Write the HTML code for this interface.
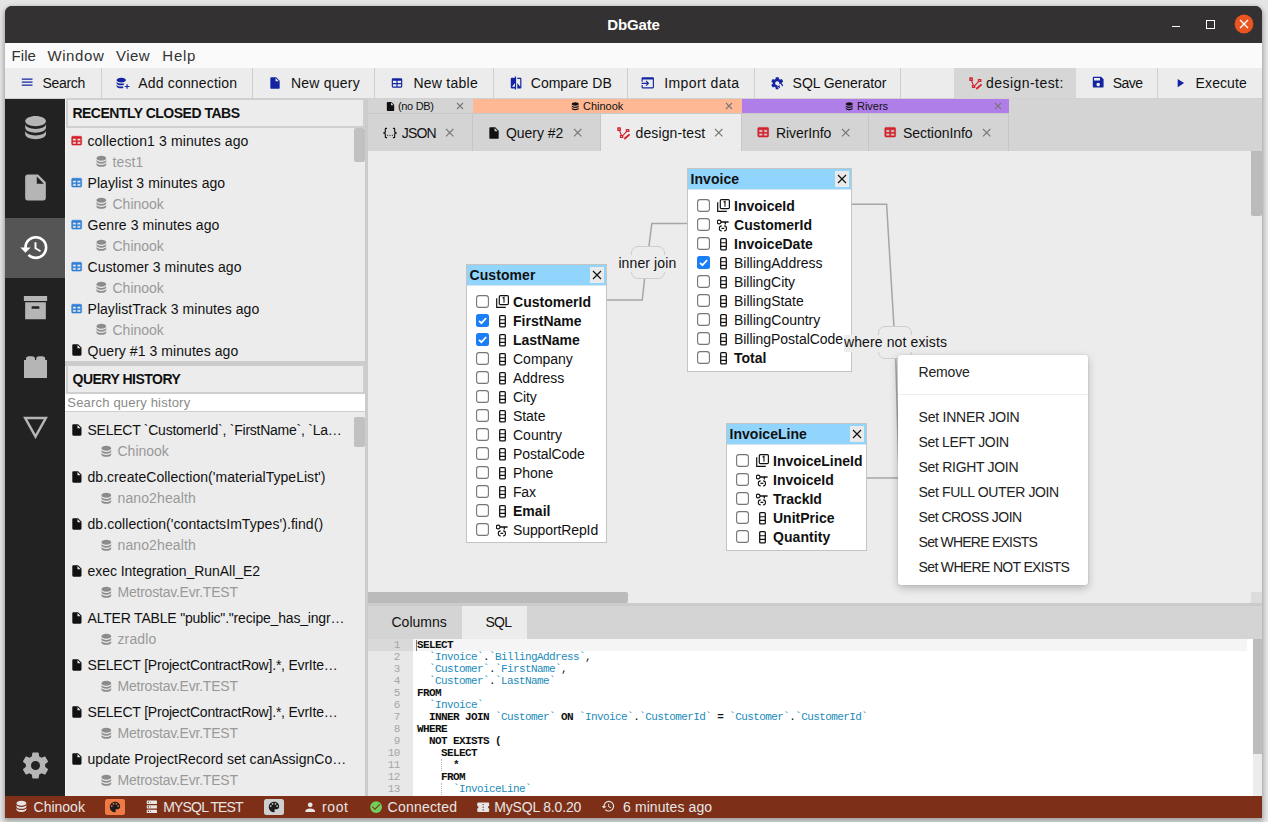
<!DOCTYPE html><html><head><meta charset="utf-8"><style>html,body{margin:0;padding:0;}body{width:1268px;height:822px;overflow:hidden;position:relative;background:#e5e5e5;font-family:"Liberation Sans",sans-serif;}</style></head><body>
<div style="position:absolute;left:5px;top:6px;width:1257px;height:812px;background:#333131;border-radius:7px 7px 0 0;box-shadow:0 2px 5px 1px rgba(0,0,0,0.32);"></div>
<div style="position:absolute;left:5px;top:6px;width:1257px;height:37px;background:#333131;border-radius:7px 7px 0 0;"></div>
<div style="position:absolute;left:333.5px;width:600px;text-align:center;top:17.00px;font:700 15px/15px 'Liberation Sans', sans-serif;color:#ffffff;white-space:pre;letter-spacing:-0.14px;">DbGate</div>
<div style="position:absolute;left:1172px;top:25.5px;width:8px;height:1.5px;background:#fff;"></div>
<div style="position:absolute;left:1206px;top:20px;width:6.5px;height:6.5px;border:1.2px solid #fff;"></div>
<svg style="position:absolute;left:1234px;top:14px;" width="20" height="20" viewBox="0 0 20 20"><circle cx="10" cy="10" r="9.4" fill="#e95420"/><path d="M6 6l8 8M14 6l-8 8" stroke="#fff" stroke-width="1.3"/></svg>
<div style="position:absolute;left:5px;top:43px;width:1257px;height:25px;background:#fafafa;"></div>
<div style="position:absolute;left:11.4px;top:48.00px;font:400 15px/15px 'Liberation Sans', sans-serif;color:#333;white-space:pre;letter-spacing:0.13px;">File</div>
<div style="position:absolute;left:47.4px;top:48.00px;font:400 15px/15px 'Liberation Sans', sans-serif;color:#333;white-space:pre;letter-spacing:0.62px;">Window</div>
<div style="position:absolute;left:116px;top:48.00px;font:400 15px/15px 'Liberation Sans', sans-serif;color:#333;white-space:pre;letter-spacing:0.47px;">View</div>
<div style="position:absolute;left:162.3px;top:48.00px;font:400 15px/15px 'Liberation Sans', sans-serif;color:#333;white-space:pre;letter-spacing:0.77px;">Help</div>
<div style="position:absolute;left:5px;top:68px;width:1257px;height:30px;background:#ececec;"></div>
<div style="position:absolute;left:5px;top:98px;width:1257px;height:1px;background:#d0d0d0;"></div>
<div style="position:absolute;left:954px;top:68px;width:122px;height:30px;background:#d6d6d6;"></div>
<div style="position:absolute;left:101px;top:68px;width:1px;height:30px;background:#cfcfcf;"></div>
<div style="position:absolute;left:252px;top:68px;width:1px;height:30px;background:#cfcfcf;"></div>
<div style="position:absolute;left:374px;top:68px;width:1px;height:30px;background:#cfcfcf;"></div>
<div style="position:absolute;left:493px;top:68px;width:1px;height:30px;background:#cfcfcf;"></div>
<div style="position:absolute;left:627px;top:68px;width:1px;height:30px;background:#cfcfcf;"></div>
<div style="position:absolute;left:754px;top:68px;width:1px;height:30px;background:#cfcfcf;"></div>
<div style="position:absolute;left:900px;top:68px;width:1px;height:30px;background:#cfcfcf;"></div>
<div style="position:absolute;left:1157px;top:68px;width:1px;height:30px;background:#cfcfcf;"></div>
<div style="position:absolute;left:42.4px;top:75.75px;font:400 14px/14px 'Liberation Sans', sans-serif;color:#111;white-space:pre;letter-spacing:-0.28px;">Search</div>
<div style="position:absolute;left:138.3px;top:75.75px;font:400 14px/14px 'Liberation Sans', sans-serif;color:#111;white-space:pre;letter-spacing:0.17px;">Add connection</div>
<div style="position:absolute;left:291px;top:75.75px;font:400 14px/14px 'Liberation Sans', sans-serif;color:#111;white-space:pre;letter-spacing:0.22px;">New query</div>
<div style="position:absolute;left:413.4px;top:75.75px;font:400 14px/14px 'Liberation Sans', sans-serif;color:#111;white-space:pre;letter-spacing:0.26px;">New table</div>
<div style="position:absolute;left:530.8px;top:75.75px;font:400 14px/14px 'Liberation Sans', sans-serif;color:#111;white-space:pre;">Compare DB</div>
<div style="position:absolute;left:664.2px;top:75.75px;font:400 14px/14px 'Liberation Sans', sans-serif;color:#111;white-space:pre;letter-spacing:0.41px;">Import data</div>
<div style="position:absolute;left:792.6px;top:75.75px;font:400 14px/14px 'Liberation Sans', sans-serif;color:#111;white-space:pre;letter-spacing:-0.05px;">SQL Generator</div>
<div style="position:absolute;left:986px;top:75.75px;font:400 14px/14px 'Liberation Sans', sans-serif;color:#111;white-space:pre;letter-spacing:0.45px;">design-test:</div>
<div style="position:absolute;left:1112.8px;top:75.75px;font:400 14px/14px 'Liberation Sans', sans-serif;color:#111;white-space:pre;letter-spacing:-0.53px;">Save</div>
<div style="position:absolute;left:1195.6px;top:75.75px;font:400 14px/14px 'Liberation Sans', sans-serif;color:#111;white-space:pre;letter-spacing:0.10px;">Execute</div>
<svg style="position:absolute;left:20.0px;top:75.35px;" width="14.3" height="14.3" viewBox="0 0 24 24"><path fill="#1424a0" fill-rule="nonzero" d="M3,6H21V8H3V6M3,11H21V13H3V11M3,16H21V18H3V16Z"/></svg>
<svg style="position:absolute;left:116.3px;top:75.7px;" width="14" height="14" viewBox="0 0 24 24"><path fill="#1424a0" fill-rule="nonzero" d="M9,3C4.58,3 1,4.79 1,7C1,9.21 4.58,11 9,11C13.42,11 17,9.21 17,7C17,4.79 13.42,3 9,3M1,9V12C1,14.21 4.58,16 9,16C10.5,16 11.9,15.8 13.1,15.4C13.4,14.6 13.9,13.9 14.5,13.3C13,12.9 11.1,13 9,13C4.58,13 1,11.21 1,9M1,14V17C1,19.21 4.58,21 9,21C10.4,21 11.7,20.8 12.8,20.5C12.4,19.7 12.2,18.9 12.1,18C11.1,18.1 10.1,18 9,18C4.58,18 1,16.21 1,14M18,14V17H15V19H18V22H20V19H23V17H20V14H18Z"/></svg>
<svg style="position:absolute;left:268.05px;top:75.85px;" width="14" height="14" viewBox="0 0 24 24"><path fill="#1424a0" fill-rule="nonzero" d="M13,9V3.5L18.5,9M6,2C4.89,2 4,2.89 4,4V20A2,2 0 0,0 6,22H18A2,2 0 0,0 20,20V8L14,2H6Z"/></svg>
<svg style="position:absolute;left:390.15px;top:75.55px;" width="14" height="14" viewBox="0 0 24 24"><path fill="#1424a0" fill-rule="nonzero" d="M5,4H19A2,2 0 0,1 21,6V18A2,2 0 0,1 19,20H5A2,2 0 0,1 3,18V6A2,2 0 0,1 5,4M5,8V12H11V8H5M13,8V12H19V8H13M5,14V18H11V14H5M13,14V18H19V14H13Z"/></svg>
<svg style="position:absolute;left:508.5px;top:75.6px;" width="14.2" height="14.2" viewBox="0 0 24 24"><path fill="#1424a0" fill-rule="nonzero" d="M19,3H14V5H19V18L14,12V21H19A2,2 0 0,0 21,19V5C21,3.89 20.1,3 19,3M10,18H5L10,12M10,3H5C3.89,3 3,3.89 3,5V19A2,2 0 0,0 5,21H10V23H12V1H10V3Z"/></svg>
<svg style="position:absolute;left:641.25px;top:76.0px;" width="13.5" height="13.5" viewBox="0 0 24 24"><path fill="#1424a0" fill-rule="nonzero" d="M1,12H10.8L8.3,9.5L9.7,8.1L14.6,13L9.7,17.9L8.3,16.5L10.8,14H1V12M21,2H3C1.9,2 1,2.9 1,4V10.1H3V6H21V20H3V16H1V20A2,2 0 0,0 3,22H21A2,2 0 0,0 23,20V4A2,2 0 0,0 21,2Z"/></svg>
<svg style="position:absolute;left:769.5px;top:75.5px;" width="14.5" height="14.5" viewBox="0 0 24 24"><path fill="#1424a0" d="M12,15.5A3.5,3.5 0 0,1 8.5,12A3.5,3.5 0 0,1 12,8.5A3.5,3.5 0 0,1 15.5,12A3.5,3.5 0 0,1 12,15.5M19.43,12.97C19.47,12.65 19.5,12.33 19.5,12C19.5,11.67 19.47,11.34 19.43,11L21.54,9.37C21.73,9.22 21.78,8.95 21.66,8.73L19.66,5.27C19.54,5.05 19.27,4.96 19.05,5.05L16.56,6.05C16.04,5.66 15.5,5.32 14.87,5.07L14.5,2.42C14.46,2.18 14.25,2 14,2H10C9.75,2 9.54,2.18 9.5,2.42L9.13,5.07C8.5,5.32 7.96,5.66 7.44,6.05L4.95,5.05C4.73,4.96 4.46,5.05 4.34,5.27L2.34,8.73C2.21,8.95 2.27,9.22 2.46,9.37L4.57,11C4.53,11.34 4.5,11.67 4.5,12C4.5,12.33 4.53,12.65 4.57,12.97L2.46,14.63C2.27,14.78 2.21,15.05 2.34,15.27L4.34,18.73C4.46,18.95 4.73,19.03 4.95,18.95L7.44,17.94C7.96,18.34 8.5,18.68 9.13,18.93L9.5,21.58C9.54,21.82 9.75,22 10,22H14C14.25,22 14.46,21.82 14.5,21.58L14.87,18.93C15.5,18.67 16.04,18.34 16.56,17.94L19.05,18.95C19.27,19.03 19.54,18.95 19.66,18.73L21.66,15.27C21.78,15.05 21.73,14.78 21.54,14.63L19.43,12.97Z"/><path d="M13 14l7 0 0 9-7 0z" fill="#ececec" transform="rotate(-35 16 18)"/><path d="M11.5 17.5l4.5-2 .5 4.8z" fill="#1424a0"/></svg>
<svg style="position:absolute;left:967px;top:75px;" width="16" height="16" viewBox="0 0 16 16"><g fill="#d3202a"><rect x="2.3" y="2.3" width="3.6" height="3.6" rx=".5"/><rect x="10.8" y="3.9" width="3.6" height="3.1" rx=".5"/><rect x="4.9" y="9.9" width="3.4" height="3.1" rx=".5"/></g><g fill="#d6d6d6"><circle cx="4.1" cy="4.1" r=".55"/><circle cx="12.6" cy="5.45" r=".55"/><circle cx="6.6" cy="11.45" r=".55"/></g><path d="M4.6 5.6L6.3 10M8 10.3L11.5 6.6" stroke="#d3202a" stroke-width="1.1" fill="none"/><path d="M9.3 14L14.6 9.4" stroke="#d3202a" stroke-width="1.9" fill="none"/></svg>
<svg style="position:absolute;left:1090.8px;top:75.3px;" width="14.4" height="14.4" viewBox="0 0 24 24"><path fill="#1424a0" fill-rule="nonzero" d="M15,9H5V5H15M12,19A3,3 0 0,1 9,16A3,3 0 0,1 12,13A3,3 0 0,1 15,16A3,3 0 0,1 12,19M17,3H5C3.89,3 3,3.9 3,5V19A2,2 0 0,0 5,21H19A2,2 0 0,0 21,19V7L17,3Z"/></svg>
<svg style="position:absolute;left:1172.8px;top:75.97px;" width="14" height="14" viewBox="0 0 24 24"><path fill="#1424a0" fill-rule="nonzero" d="M8,5.14V19.14L19,12.14L8,5.14Z"/></svg>
<div style="position:absolute;left:5px;top:99px;width:60px;height:697px;background:#222222;"></div>
<div style="position:absolute;left:5px;top:218px;width:60px;height:60px;background:#555555;"></div>
<svg style="position:absolute;left:19.55px;top:111.8px;" width="31.2" height="31.2" viewBox="0 0 24 24"><path fill="#b5b5b5" fill-rule="nonzero" d="M12,3C7.58,3 4,4.79 4,7C4,9.21 7.58,11 12,11C16.42,11 20,9.21 20,7C20,4.79 16.42,3 12,3M4,9V12C4,14.21 7.58,16 12,16C16.42,16 20,14.21 20,12V9C20,11.21 16.42,13 12,13C7.58,13 4,11.21 4,9M4,14V17C4,19.21 7.58,21 12,21C16.42,21 20,19.21 20,17V14C20,16.21 16.42,18 12,18C7.58,18 4,16.21 4,14Z"/></svg>
<svg style="position:absolute;left:19.5px;top:171.95px;" width="31" height="31" viewBox="0 0 24 24"><path fill="#b5b5b5" fill-rule="nonzero" d="M13,9V3.5L18.5,9M6,2C4.89,2 4,2.89 4,4V20A2,2 0 0,0 6,22H18A2,2 0 0,0 20,20V8L14,2H6Z"/></svg>
<svg style="position:absolute;left:19.3px;top:231.6px;" width="31" height="31" viewBox="0 0 24 24"><path fill="#ffffff" fill-rule="nonzero" d="M13.5,8H12V13L16.28,15.54L17,14.33L13.5,12.25V8M13,3A9,9 0 0,0 4,12H1L4.96,16.03L9,12H6A7,7 0 0,1 13,5A7,7 0 0,1 20,12A7,7 0 0,1 13,19C11.07,19 9.32,18.21 8.06,16.94L6.64,18.36C8.27,20 10.5,21 13,21A9,9 0 0,0 22,12A9,9 0 0,0 13,3Z"/></svg>
<svg style="position:absolute;left:19.85px;top:292.0px;" width="31" height="31" viewBox="0 0 24 24"><path fill="#b5b5b5" fill-rule="nonzero" d="M3,3H21V7H3V3M4,8H20V21H4V8M9.5,11A0.5,0.5 0 0,0 9,11.5V13H15V11.5A0.5,0.5 0 0,0 14.5,11H9.5Z"/></svg>
<svg style="position:absolute;left:23.5px;top:355px;" width="23.5" height="23.5" viewBox="0 0 23.5 23.5"><path fill="#b5b5b5" d="M0 5H2V4.5A3 3 0 0 1 5 1.2H8A3 3 0 0 1 11 4.5V5H12.2V4.5A3 3 0 0 1 15.2 1.2H18.2A3 3 0 0 1 21.2 4.5V5H23.5V23H0Z"/></svg>
<svg style="position:absolute;left:22.5px;top:416px;" width="25" height="23" viewBox="0 0 25 23"><path d="M2.2 2H22.8L12.5 20.5Z" fill="none" stroke="#b5b5b5" stroke-width="2.5"/></svg>
<svg style="position:absolute;left:19.5px;top:750.1px;" width="31" height="31" viewBox="0 0 24 24"><path fill="#b5b5b5" fill-rule="nonzero" d="M12,15.5A3.5,3.5 0 0,1 8.5,12A3.5,3.5 0 0,1 12,8.5A3.5,3.5 0 0,1 15.5,12A3.5,3.5 0 0,1 12,15.5M19.43,12.97C19.47,12.65 19.5,12.33 19.5,12C19.5,11.67 19.47,11.34 19.43,11L21.54,9.37C21.73,9.22 21.78,8.95 21.66,8.73L19.66,5.27C19.54,5.05 19.27,4.96 19.05,5.05L16.56,6.05C16.04,5.66 15.5,5.32 14.87,5.07L14.5,2.42C14.46,2.18 14.25,2 14,2H10C9.75,2 9.54,2.18 9.5,2.42L9.13,5.07C8.5,5.32 7.96,5.66 7.44,6.05L4.95,5.05C4.73,4.96 4.46,5.05 4.34,5.27L2.34,8.73C2.21,8.95 2.27,9.22 2.46,9.37L4.57,11C4.53,11.34 4.5,11.67 4.5,12C4.5,12.33 4.53,12.65 4.57,12.97L2.46,14.63C2.27,14.78 2.21,15.05 2.34,15.27L4.34,18.73C4.46,18.95 4.73,19.03 4.95,18.95L7.44,17.94C7.96,18.34 8.5,18.68 9.13,18.93L9.5,21.58C9.54,21.82 9.75,22 10,22H14C14.25,22 14.46,21.82 14.5,21.58L14.87,18.93C15.5,18.67 16.04,18.34 16.56,17.94L19.05,18.95C19.27,19.03 19.54,18.95 19.66,18.73L21.66,15.27C21.78,15.05 21.73,14.78 21.54,14.63L19.43,12.97Z"/></svg>
<div style="position:absolute;left:65px;top:99px;width:300px;height:697px;background:#ececec;"></div>
<div style="position:absolute;left:65px;top:99px;width:1px;height:697px;background:#f4f4f4;"></div>
<div style="position:absolute;left:66px;top:98px;width:295px;height:26px;border:2px solid #cfcfcf;background:#ececec;"></div>
<div style="position:absolute;left:72.4px;top:106.15px;font:700 14px/14px 'Liberation Sans', sans-serif;color:#111;white-space:pre;letter-spacing:-0.50px;">RECENTLY CLOSED TABS</div>
<svg style="position:absolute;left:70.33px;top:133.83px;" width="13.333333333333334" height="13.333333333333334" viewBox="0 0 24 24"><path fill="#d3202a" stroke="#d3202a" stroke-width="0.9" d="M5,4H19A2,2 0 0,1 21,6V18A2,2 0 0,1 19,20H5A2,2 0 0,1 3,18V6A2,2 0 0,1 5,4M5,8V12H11V8H5M13,8V12H19V8H13M5,14V18H11V14H5M13,14V18H19V14H13Z"/></svg>
<div style="position:absolute;left:87.5px;top:133.75px;font:400 14px/14px 'Liberation Sans', sans-serif;color:#111;white-space:pre;letter-spacing:0.12px;">collection1 3 minutes ago</div>
<svg style="position:absolute;left:94.42px;top:154.17px;" width="14.666666666666668" height="14.666666666666668" viewBox="0 0 24 24"><path fill="#8c8c8c" fill-rule="nonzero" d="M12,3C7.58,3 4,4.79 4,7C4,9.21 7.58,11 12,11C16.42,11 20,9.21 20,7C20,4.79 16.42,3 12,3M4,9V12C4,14.21 7.58,16 12,16C16.42,16 20,14.21 20,12V9C20,11.21 16.42,13 12,13C7.58,13 4,11.21 4,9M4,14V17C4,19.21 7.58,21 12,21C16.42,21 20,19.21 20,17V14C20,16.21 16.42,18 12,18C7.58,18 4,16.21 4,14Z"/></svg>
<div style="position:absolute;left:112.5px;top:154.95px;font:400 14px/14px 'Liberation Sans', sans-serif;color:#999999;white-space:pre;letter-spacing:0.12px;">test1</div>
<svg style="position:absolute;left:70.33px;top:175.83px;" width="13.333333333333334" height="13.333333333333334" viewBox="0 0 24 24"><path fill="#2f7fd6" stroke="#2f7fd6" stroke-width="0.9" d="M5,4H19A2,2 0 0,1 21,6V18A2,2 0 0,1 19,20H5A2,2 0 0,1 3,18V6A2,2 0 0,1 5,4M5,8V12H11V8H5M13,8V12H19V8H13M5,14V18H11V14H5M13,14V18H19V14H13Z"/></svg>
<div style="position:absolute;left:87.5px;top:175.75px;font:400 14px/14px 'Liberation Sans', sans-serif;color:#111;white-space:pre;letter-spacing:0.07px;">Playlist 3 minutes ago</div>
<svg style="position:absolute;left:94.42px;top:196.17px;" width="14.666666666666668" height="14.666666666666668" viewBox="0 0 24 24"><path fill="#8c8c8c" fill-rule="nonzero" d="M12,3C7.58,3 4,4.79 4,7C4,9.21 7.58,11 12,11C16.42,11 20,9.21 20,7C20,4.79 16.42,3 12,3M4,9V12C4,14.21 7.58,16 12,16C16.42,16 20,14.21 20,12V9C20,11.21 16.42,13 12,13C7.58,13 4,11.21 4,9M4,14V17C4,19.21 7.58,21 12,21C16.42,21 20,19.21 20,17V14C20,16.21 16.42,18 12,18C7.58,18 4,16.21 4,14Z"/></svg>
<div style="position:absolute;left:112.5px;top:196.95px;font:400 14px/14px 'Liberation Sans', sans-serif;color:#999999;white-space:pre;letter-spacing:-0.01px;">Chinook</div>
<svg style="position:absolute;left:70.33px;top:217.83px;" width="13.333333333333334" height="13.333333333333334" viewBox="0 0 24 24"><path fill="#2f7fd6" stroke="#2f7fd6" stroke-width="0.9" d="M5,4H19A2,2 0 0,1 21,6V18A2,2 0 0,1 19,20H5A2,2 0 0,1 3,18V6A2,2 0 0,1 5,4M5,8V12H11V8H5M13,8V12H19V8H13M5,14V18H11V14H5M13,14V18H19V14H13Z"/></svg>
<div style="position:absolute;left:87.5px;top:217.75px;font:400 14px/14px 'Liberation Sans', sans-serif;color:#111;white-space:pre;letter-spacing:0.06px;">Genre 3 minutes ago</div>
<svg style="position:absolute;left:94.42px;top:238.17px;" width="14.666666666666668" height="14.666666666666668" viewBox="0 0 24 24"><path fill="#8c8c8c" fill-rule="nonzero" d="M12,3C7.58,3 4,4.79 4,7C4,9.21 7.58,11 12,11C16.42,11 20,9.21 20,7C20,4.79 16.42,3 12,3M4,9V12C4,14.21 7.58,16 12,16C16.42,16 20,14.21 20,12V9C20,11.21 16.42,13 12,13C7.58,13 4,11.21 4,9M4,14V17C4,19.21 7.58,21 12,21C16.42,21 20,19.21 20,17V14C20,16.21 16.42,18 12,18C7.58,18 4,16.21 4,14Z"/></svg>
<div style="position:absolute;left:112.5px;top:238.95px;font:400 14px/14px 'Liberation Sans', sans-serif;color:#999999;white-space:pre;letter-spacing:-0.01px;">Chinook</div>
<svg style="position:absolute;left:70.33px;top:259.83px;" width="13.333333333333334" height="13.333333333333334" viewBox="0 0 24 24"><path fill="#2f7fd6" stroke="#2f7fd6" stroke-width="0.9" d="M5,4H19A2,2 0 0,1 21,6V18A2,2 0 0,1 19,20H5A2,2 0 0,1 3,18V6A2,2 0 0,1 5,4M5,8V12H11V8H5M13,8V12H19V8H13M5,14V18H11V14H5M13,14V18H19V14H13Z"/></svg>
<div style="position:absolute;left:87.5px;top:259.75px;font:400 14px/14px 'Liberation Sans', sans-serif;color:#111;white-space:pre;letter-spacing:0.07px;">Customer 3 minutes ago</div>
<svg style="position:absolute;left:94.42px;top:280.17px;" width="14.666666666666668" height="14.666666666666668" viewBox="0 0 24 24"><path fill="#8c8c8c" fill-rule="nonzero" d="M12,3C7.58,3 4,4.79 4,7C4,9.21 7.58,11 12,11C16.42,11 20,9.21 20,7C20,4.79 16.42,3 12,3M4,9V12C4,14.21 7.58,16 12,16C16.42,16 20,14.21 20,12V9C20,11.21 16.42,13 12,13C7.58,13 4,11.21 4,9M4,14V17C4,19.21 7.58,21 12,21C16.42,21 20,19.21 20,17V14C20,16.21 16.42,18 12,18C7.58,18 4,16.21 4,14Z"/></svg>
<div style="position:absolute;left:112.5px;top:280.95px;font:400 14px/14px 'Liberation Sans', sans-serif;color:#999999;white-space:pre;letter-spacing:-0.01px;">Chinook</div>
<svg style="position:absolute;left:70.33px;top:301.83px;" width="13.333333333333334" height="13.333333333333334" viewBox="0 0 24 24"><path fill="#2f7fd6" stroke="#2f7fd6" stroke-width="0.9" d="M5,4H19A2,2 0 0,1 21,6V18A2,2 0 0,1 19,20H5A2,2 0 0,1 3,18V6A2,2 0 0,1 5,4M5,8V12H11V8H5M13,8V12H19V8H13M5,14V18H11V14H5M13,14V18H19V14H13Z"/></svg>
<div style="position:absolute;left:87.5px;top:301.75px;font:400 14px/14px 'Liberation Sans', sans-serif;color:#111;white-space:pre;letter-spacing:0.04px;">PlaylistTrack 3 minutes ago</div>
<svg style="position:absolute;left:94.42px;top:322.17px;" width="14.666666666666668" height="14.666666666666668" viewBox="0 0 24 24"><path fill="#8c8c8c" fill-rule="nonzero" d="M12,3C7.58,3 4,4.79 4,7C4,9.21 7.58,11 12,11C16.42,11 20,9.21 20,7C20,4.79 16.42,3 12,3M4,9V12C4,14.21 7.58,16 12,16C16.42,16 20,14.21 20,12V9C20,11.21 16.42,13 12,13C7.58,13 4,11.21 4,9M4,14V17C4,19.21 7.58,21 12,21C16.42,21 20,19.21 20,17V14C20,16.21 16.42,18 12,18C7.58,18 4,16.21 4,14Z"/></svg>
<div style="position:absolute;left:112.5px;top:322.95px;font:400 14px/14px 'Liberation Sans', sans-serif;color:#999999;white-space:pre;letter-spacing:-0.01px;">Chinook</div>
<svg style="position:absolute;left:69.7px;top:342.85px;" width="13.799999999999999" height="13.799999999999999" viewBox="0 0 24 24"><path fill="#111" fill-rule="nonzero" d="M13,9V3.5L18.5,9M6,2C4.89,2 4,2.89 4,4V20A2,2 0 0,0 6,22H18A2,2 0 0,0 20,20V8L14,2H6Z"/></svg>
<div style="position:absolute;left:87.5px;top:343.75px;font:400 14px/14px 'Liberation Sans', sans-serif;color:#111;white-space:pre;letter-spacing:0.06px;">Query #1 3 minutes ago</div>
<div style="position:absolute;left:354px;top:128px;width:11px;height:34px;background:#c1c1c1;border-radius:2px;"></div>
<div style="position:absolute;left:65px;top:361px;width:300px;height:5px;background:#cccccc;"></div>
<div style="position:absolute;left:66px;top:366px;width:295px;height:26px;border:2px solid #cfcfcf;border-top-width:0;background:#ececec;"></div>
<div style="position:absolute;left:72.5px;top:371.85px;font:700 14px/14px 'Liberation Sans', sans-serif;color:#111;white-space:pre;letter-spacing:-0.50px;">QUERY HISTORY</div>
<div style="position:absolute;left:65px;top:394px;width:300px;height:17px;background:#ffffff;"></div>
<div style="position:absolute;left:65px;top:411px;width:300px;height:1px;background:#cfcfcf;"></div>
<div style="position:absolute;left:67.3px;top:396.00px;font:400 13px/13px 'Liberation Sans', sans-serif;color:#8a8a8a;white-space:pre;letter-spacing:0.19px;">Search query history</div>
<svg style="position:absolute;left:69.7px;top:422.85px;" width="13.799999999999999" height="13.799999999999999" viewBox="0 0 24 24"><path fill="#111" fill-rule="nonzero" d="M13,9V3.5L18.5,9M6,2C4.89,2 4,2.89 4,4V20A2,2 0 0,0 6,22H18A2,2 0 0,0 20,20V8L14,2H6Z"/></svg>
<div style="position:absolute;left:87.5px;top:422.65px;font:400 14px/14px 'Liberation Sans', sans-serif;color:#111;white-space:pre;letter-spacing:-0.25px;">SELECT `CustomerId`, `FirstName`, `La…</div>
<svg style="position:absolute;left:99.02px;top:444.17px;" width="14.666666666666668" height="14.666666666666668" viewBox="0 0 24 24"><path fill="#8c8c8c" fill-rule="nonzero" d="M12,3C7.58,3 4,4.79 4,7C4,9.21 7.58,11 12,11C16.42,11 20,9.21 20,7C20,4.79 16.42,3 12,3M4,9V12C4,14.21 7.58,16 12,16C16.42,16 20,14.21 20,12V9C20,11.21 16.42,13 12,13C7.58,13 4,11.21 4,9M4,14V17C4,19.21 7.58,21 12,21C16.42,21 20,19.21 20,17V14C20,16.21 16.42,18 12,18C7.58,18 4,16.21 4,14Z"/></svg>
<div style="position:absolute;left:117.5px;top:444.15px;font:400 14px/14px 'Liberation Sans', sans-serif;color:#999999;white-space:pre;letter-spacing:-0.01px;">Chinook</div>
<svg style="position:absolute;left:69.7px;top:469.85px;" width="13.799999999999999" height="13.799999999999999" viewBox="0 0 24 24"><path fill="#111" fill-rule="nonzero" d="M13,9V3.5L18.5,9M6,2C4.89,2 4,2.89 4,4V20A2,2 0 0,0 6,22H18A2,2 0 0,0 20,20V8L14,2H6Z"/></svg>
<div style="position:absolute;left:87.5px;top:469.65px;font:400 14px/14px 'Liberation Sans', sans-serif;color:#111;white-space:pre;letter-spacing:0.04px;">db.createCollection('materialTypeList')</div>
<svg style="position:absolute;left:99.02px;top:491.17px;" width="14.666666666666668" height="14.666666666666668" viewBox="0 0 24 24"><path fill="#8c8c8c" fill-rule="nonzero" d="M12,3C7.58,3 4,4.79 4,7C4,9.21 7.58,11 12,11C16.42,11 20,9.21 20,7C20,4.79 16.42,3 12,3M4,9V12C4,14.21 7.58,16 12,16C16.42,16 20,14.21 20,12V9C20,11.21 16.42,13 12,13C7.58,13 4,11.21 4,9M4,14V17C4,19.21 7.58,21 12,21C16.42,21 20,19.21 20,17V14C20,16.21 16.42,18 12,18C7.58,18 4,16.21 4,14Z"/></svg>
<div style="position:absolute;left:117.5px;top:491.15px;font:400 14px/14px 'Liberation Sans', sans-serif;color:#999999;white-space:pre;letter-spacing:0.12px;">nano2health</div>
<svg style="position:absolute;left:69.7px;top:516.85px;" width="13.799999999999999" height="13.799999999999999" viewBox="0 0 24 24"><path fill="#111" fill-rule="nonzero" d="M13,9V3.5L18.5,9M6,2C4.89,2 4,2.89 4,4V20A2,2 0 0,0 6,22H18A2,2 0 0,0 20,20V8L14,2H6Z"/></svg>
<div style="position:absolute;left:87.5px;top:516.65px;font:400 14px/14px 'Liberation Sans', sans-serif;color:#111;white-space:pre;letter-spacing:0.06px;">db.collection('contactsImTypes').find()</div>
<svg style="position:absolute;left:99.02px;top:538.17px;" width="14.666666666666668" height="14.666666666666668" viewBox="0 0 24 24"><path fill="#8c8c8c" fill-rule="nonzero" d="M12,3C7.58,3 4,4.79 4,7C4,9.21 7.58,11 12,11C16.42,11 20,9.21 20,7C20,4.79 16.42,3 12,3M4,9V12C4,14.21 7.58,16 12,16C16.42,16 20,14.21 20,12V9C20,11.21 16.42,13 12,13C7.58,13 4,11.21 4,9M4,14V17C4,19.21 7.58,21 12,21C16.42,21 20,19.21 20,17V14C20,16.21 16.42,18 12,18C7.58,18 4,16.21 4,14Z"/></svg>
<div style="position:absolute;left:117.5px;top:538.15px;font:400 14px/14px 'Liberation Sans', sans-serif;color:#999999;white-space:pre;letter-spacing:0.12px;">nano2health</div>
<svg style="position:absolute;left:69.7px;top:563.85px;" width="13.799999999999999" height="13.799999999999999" viewBox="0 0 24 24"><path fill="#111" fill-rule="nonzero" d="M13,9V3.5L18.5,9M6,2C4.89,2 4,2.89 4,4V20A2,2 0 0,0 6,22H18A2,2 0 0,0 20,20V8L14,2H6Z"/></svg>
<div style="position:absolute;left:87.5px;top:563.65px;font:400 14px/14px 'Liberation Sans', sans-serif;color:#111;white-space:pre;letter-spacing:-0.04px;">exec Integration_RunAll_E2</div>
<svg style="position:absolute;left:99.02px;top:585.17px;" width="14.666666666666668" height="14.666666666666668" viewBox="0 0 24 24"><path fill="#8c8c8c" fill-rule="nonzero" d="M12,3C7.58,3 4,4.79 4,7C4,9.21 7.58,11 12,11C16.42,11 20,9.21 20,7C20,4.79 16.42,3 12,3M4,9V12C4,14.21 7.58,16 12,16C16.42,16 20,14.21 20,12V9C20,11.21 16.42,13 12,13C7.58,13 4,11.21 4,9M4,14V17C4,19.21 7.58,21 12,21C16.42,21 20,19.21 20,17V14C20,16.21 16.42,18 12,18C7.58,18 4,16.21 4,14Z"/></svg>
<div style="position:absolute;left:117.5px;top:585.15px;font:400 14px/14px 'Liberation Sans', sans-serif;color:#999999;white-space:pre;letter-spacing:-0.22px;">Metrostav.Evr.TEST</div>
<svg style="position:absolute;left:69.7px;top:610.85px;" width="13.799999999999999" height="13.799999999999999" viewBox="0 0 24 24"><path fill="#111" fill-rule="nonzero" d="M13,9V3.5L18.5,9M6,2C4.89,2 4,2.89 4,4V20A2,2 0 0,0 6,22H18A2,2 0 0,0 20,20V8L14,2H6Z"/></svg>
<div style="position:absolute;left:87.5px;top:610.65px;font:400 14px/14px 'Liberation Sans', sans-serif;color:#111;white-space:pre;letter-spacing:-0.19px;">ALTER TABLE "public"."recipe_has_ingr…</div>
<svg style="position:absolute;left:99.02px;top:632.17px;" width="14.666666666666668" height="14.666666666666668" viewBox="0 0 24 24"><path fill="#8c8c8c" fill-rule="nonzero" d="M12,3C7.58,3 4,4.79 4,7C4,9.21 7.58,11 12,11C16.42,11 20,9.21 20,7C20,4.79 16.42,3 12,3M4,9V12C4,14.21 7.58,16 12,16C16.42,16 20,14.21 20,12V9C20,11.21 16.42,13 12,13C7.58,13 4,11.21 4,9M4,14V17C4,19.21 7.58,21 12,21C16.42,21 20,19.21 20,17V14C20,16.21 16.42,18 12,18C7.58,18 4,16.21 4,14Z"/></svg>
<div style="position:absolute;left:117.5px;top:632.15px;font:400 14px/14px 'Liberation Sans', sans-serif;color:#999999;white-space:pre;letter-spacing:0.12px;">zradlo</div>
<svg style="position:absolute;left:69.7px;top:657.85px;" width="13.799999999999999" height="13.799999999999999" viewBox="0 0 24 24"><path fill="#111" fill-rule="nonzero" d="M13,9V3.5L18.5,9M6,2C4.89,2 4,2.89 4,4V20A2,2 0 0,0 6,22H18A2,2 0 0,0 20,20V8L14,2H6Z"/></svg>
<div style="position:absolute;left:87.5px;top:657.65px;font:400 14px/14px 'Liberation Sans', sans-serif;color:#111;white-space:pre;letter-spacing:-0.21px;">SELECT [ProjectContractRow].*, EvrIte…</div>
<svg style="position:absolute;left:99.02px;top:679.17px;" width="14.666666666666668" height="14.666666666666668" viewBox="0 0 24 24"><path fill="#8c8c8c" fill-rule="nonzero" d="M12,3C7.58,3 4,4.79 4,7C4,9.21 7.58,11 12,11C16.42,11 20,9.21 20,7C20,4.79 16.42,3 12,3M4,9V12C4,14.21 7.58,16 12,16C16.42,16 20,14.21 20,12V9C20,11.21 16.42,13 12,13C7.58,13 4,11.21 4,9M4,14V17C4,19.21 7.58,21 12,21C16.42,21 20,19.21 20,17V14C20,16.21 16.42,18 12,18C7.58,18 4,16.21 4,14Z"/></svg>
<div style="position:absolute;left:117.5px;top:679.15px;font:400 14px/14px 'Liberation Sans', sans-serif;color:#999999;white-space:pre;letter-spacing:-0.22px;">Metrostav.Evr.TEST</div>
<svg style="position:absolute;left:69.7px;top:704.85px;" width="13.799999999999999" height="13.799999999999999" viewBox="0 0 24 24"><path fill="#111" fill-rule="nonzero" d="M13,9V3.5L18.5,9M6,2C4.89,2 4,2.89 4,4V20A2,2 0 0,0 6,22H18A2,2 0 0,0 20,20V8L14,2H6Z"/></svg>
<div style="position:absolute;left:87.5px;top:704.65px;font:400 14px/14px 'Liberation Sans', sans-serif;color:#111;white-space:pre;letter-spacing:-0.21px;">SELECT [ProjectContractRow].*, EvrIte…</div>
<svg style="position:absolute;left:99.02px;top:726.17px;" width="14.666666666666668" height="14.666666666666668" viewBox="0 0 24 24"><path fill="#8c8c8c" fill-rule="nonzero" d="M12,3C7.58,3 4,4.79 4,7C4,9.21 7.58,11 12,11C16.42,11 20,9.21 20,7C20,4.79 16.42,3 12,3M4,9V12C4,14.21 7.58,16 12,16C16.42,16 20,14.21 20,12V9C20,11.21 16.42,13 12,13C7.58,13 4,11.21 4,9M4,14V17C4,19.21 7.58,21 12,21C16.42,21 20,19.21 20,17V14C20,16.21 16.42,18 12,18C7.58,18 4,16.21 4,14Z"/></svg>
<div style="position:absolute;left:117.5px;top:726.15px;font:400 14px/14px 'Liberation Sans', sans-serif;color:#999999;white-space:pre;letter-spacing:-0.22px;">Metrostav.Evr.TEST</div>
<svg style="position:absolute;left:69.7px;top:751.85px;" width="13.799999999999999" height="13.799999999999999" viewBox="0 0 24 24"><path fill="#111" fill-rule="nonzero" d="M13,9V3.5L18.5,9M6,2C4.89,2 4,2.89 4,4V20A2,2 0 0,0 6,22H18A2,2 0 0,0 20,20V8L14,2H6Z"/></svg>
<div style="position:absolute;left:87.5px;top:751.65px;font:400 14px/14px 'Liberation Sans', sans-serif;color:#111;white-space:pre;letter-spacing:0.01px;">update ProjectRecord set canAssignCo…</div>
<svg style="position:absolute;left:99.02px;top:773.17px;" width="14.666666666666668" height="14.666666666666668" viewBox="0 0 24 24"><path fill="#8c8c8c" fill-rule="nonzero" d="M12,3C7.58,3 4,4.79 4,7C4,9.21 7.58,11 12,11C16.42,11 20,9.21 20,7C20,4.79 16.42,3 12,3M4,9V12C4,14.21 7.58,16 12,16C16.42,16 20,14.21 20,12V9C20,11.21 16.42,13 12,13C7.58,13 4,11.21 4,9M4,14V17C4,19.21 7.58,21 12,21C16.42,21 20,19.21 20,17V14C20,16.21 16.42,18 12,18C7.58,18 4,16.21 4,14Z"/></svg>
<div style="position:absolute;left:117.5px;top:773.15px;font:400 14px/14px 'Liberation Sans', sans-serif;color:#999999;white-space:pre;letter-spacing:-0.22px;">Metrostav.Evr.TEST</div>
<div style="position:absolute;left:354px;top:417px;width:11px;height:30px;background:#c1c1c1;border-radius:2px;"></div>
<div style="position:absolute;left:365px;top:99px;width:3px;height:697px;background:#cccccc;"></div>
<div style="position:absolute;left:368px;top:99px;width:894px;height:52px;background:#d4d4d4;"></div>
<div style="position:absolute;left:368px;top:151px;width:894px;height:452px;background:#ececec;"></div>
<div style="position:absolute;left:473px;top:99px;width:269px;height:14px;background:#ffb894;"></div>
<div style="position:absolute;left:742px;top:99px;width:267px;height:14px;background:#b07ee8;"></div>
<div style="position:absolute;left:368px;top:113px;width:641px;height:1px;background:#c8c8c8;"></div>
<div style="position:absolute;left:601px;top:114px;width:141px;height:37px;background:#ececec;"></div>
<div style="position:absolute;left:472px;top:114px;width:1px;height:37px;background:#c6c6c6;"></div>
<div style="position:absolute;left:600px;top:114px;width:1px;height:37px;background:#c6c6c6;"></div>
<div style="position:absolute;left:741px;top:114px;width:1px;height:37px;background:#c6c6c6;"></div>
<div style="position:absolute;left:868px;top:114px;width:1px;height:37px;background:#c6c6c6;"></div>
<div style="position:absolute;left:1008px;top:114px;width:1px;height:37px;background:#c6c6c6;"></div>
<svg style="position:absolute;left:385.03px;top:100.78px;" width="11.04" height="11.04" viewBox="0 0 24 24"><path fill="#111" fill-rule="nonzero" d="M13,9V3.5L18.5,9M6,2C4.89,2 4,2.89 4,4V20A2,2 0 0,0 6,22H18A2,2 0 0,0 20,20V8L14,2H6Z"/></svg>
<div style="position:absolute;left:398px;top:100.69px;font:400 11px/11px 'Liberation Sans', sans-serif;color:#111;white-space:pre;letter-spacing:-0.33px;">(no DB)</div>
<svg style="position:absolute;left:456.25px;top:101.9px;" width="8" height="8" viewBox="0 0 8 8"><path d="M1 1L7 7M7 1L1 7" stroke="#777" stroke-width="1.1"/></svg>
<svg style="position:absolute;left:570.08px;top:100.78px;" width="10.533333333333333" height="10.533333333333333" viewBox="0 0 24 24"><path fill="#111" fill-rule="nonzero" d="M12,3C7.58,3 4,4.79 4,7C4,9.21 7.58,11 12,11C16.42,11 20,9.21 20,7C20,4.79 16.42,3 12,3M4,9V12C4,14.21 7.58,16 12,16C16.42,16 20,14.21 20,12V9C20,11.21 16.42,13 12,13C7.58,13 4,11.21 4,9M4,14V17C4,19.21 7.58,21 12,21C16.42,21 20,19.21 20,17V14C20,16.21 16.42,18 12,18C7.58,18 4,16.21 4,14Z"/></svg>
<div style="position:absolute;left:583px;top:100.69px;font:400 11px/11px 'Liberation Sans', sans-serif;color:#111;white-space:pre;letter-spacing:-0.01px;">Chinook</div>
<svg style="position:absolute;left:725.25px;top:101.9px;" width="8" height="8" viewBox="0 0 8 8"><path d="M1 1L7 7M7 1L1 7" stroke="#777" stroke-width="1.1"/></svg>
<svg style="position:absolute;left:844.08px;top:100.78px;" width="10.533333333333333" height="10.533333333333333" viewBox="0 0 24 24"><path fill="#111" fill-rule="nonzero" d="M12,3C7.58,3 4,4.79 4,7C4,9.21 7.58,11 12,11C16.42,11 20,9.21 20,7C20,4.79 16.42,3 12,3M4,9V12C4,14.21 7.58,16 12,16C16.42,16 20,14.21 20,12V9C20,11.21 16.42,13 12,13C7.58,13 4,11.21 4,9M4,14V17C4,19.21 7.58,21 12,21C16.42,21 20,19.21 20,17V14C20,16.21 16.42,18 12,18C7.58,18 4,16.21 4,14Z"/></svg>
<div style="position:absolute;left:857px;top:100.69px;font:400 11px/11px 'Liberation Sans', sans-serif;color:#111;white-space:pre;letter-spacing:-0.03px;">Rivers</div>
<svg style="position:absolute;left:994.25px;top:101.9px;" width="8" height="8" viewBox="0 0 8 8"><path d="M1 1L7 7M7 1L1 7" stroke="#777" stroke-width="1.1"/></svg>
<svg style="position:absolute;left:383px;top:125.85px;" width="14" height="14" viewBox="0 0 24 24"><path fill="#111" d="M5,3H7V5H5V10A2,2 0 0,1 3,12A2,2 0 0,1 5,14V19H7V21H5C3.93,20.73 3,20.1 3,19V15A2,2 0 0,0 1,13H0V11H1A2,2 0 0,0 3,9V5A2,2 0 0,1 5,3M19,3A2,2 0 0,1 21,5V9A2,2 0 0,0 23,11H24V13H23A2,2 0 0,0 21,15V19A2,2 0 0,1 19,21H17V19H19V14A2,2 0 0,1 21,12A2,2 0 0,1 19,10V5H17V3H19M12,15A1,1 0 0,1 13,16A1,1 0 0,1 12,17A1,1 0 0,1 11,16A1,1 0 0,1 12,15M8,15A1,1 0 0,1 9,16A1,1 0 0,1 8,17A1,1 0 0,1 7,16A1,1 0 0,1 8,15M16,15A1,1 0 0,1 17,16A1,1 0 0,1 16,17A1,1 0 0,1 15,16A1,1 0 0,1 16,15Z"/></svg>
<div style="position:absolute;left:401.7px;top:126.15px;font:400 14px/14px 'Liberation Sans', sans-serif;color:#111;white-space:pre;letter-spacing:-0.78px;">JSON</div>
<svg style="position:absolute;left:444.8px;top:128.0px;" width="9.4" height="9.4" viewBox="0 0 9.4 9.4"><path d="M1 1L8.4 8.4M8.4 1L1 8.4" stroke="#777" stroke-width="1.1"/></svg>
<svg style="position:absolute;left:487.33px;top:125.73px;" width="14.04" height="14.04" viewBox="0 0 24 24"><path fill="#111" fill-rule="nonzero" d="M13,9V3.5L18.5,9M6,2C4.89,2 4,2.89 4,4V20A2,2 0 0,0 6,22H18A2,2 0 0,0 20,20V8L14,2H6Z"/></svg>
<div style="position:absolute;left:506px;top:126.15px;font:400 14px/14px 'Liberation Sans', sans-serif;color:#111;white-space:pre;letter-spacing:-0.06px;">Query #2</div>
<svg style="position:absolute;left:573.3px;top:128.0px;" width="9.4" height="9.4" viewBox="0 0 9.4 9.4"><path d="M1 1L8.4 8.4M8.4 1L1 8.4" stroke="#777" stroke-width="1.1"/></svg>
<svg style="position:absolute;left:615px;top:125px;" width="16" height="16" viewBox="0 0 16 16"><g fill="#d3202a"><rect x="2.3" y="2.3" width="3.6" height="3.6" rx=".5"/><rect x="10.8" y="3.9" width="3.6" height="3.1" rx=".5"/><rect x="4.9" y="9.9" width="3.4" height="3.1" rx=".5"/></g><g fill="#ececec"><circle cx="4.1" cy="4.1" r=".55"/><circle cx="12.6" cy="5.45" r=".55"/><circle cx="6.6" cy="11.45" r=".55"/></g><path d="M4.6 5.6L6.3 10M8 10.3L11.5 6.6" stroke="#d3202a" stroke-width="1.1" fill="none"/><path d="M9.3 14L14.6 9.4" stroke="#d3202a" stroke-width="1.9" fill="none"/></svg>
<div style="position:absolute;left:635.5px;top:126.15px;font:400 14px/14px 'Liberation Sans', sans-serif;color:#111;white-space:pre;letter-spacing:0.12px;">design-test</div>
<svg style="position:absolute;left:714.3px;top:128.0px;" width="9.4" height="9.4" viewBox="0 0 9.4 9.4"><path d="M1 1L8.4 8.4M8.4 1L1 8.4" stroke="#777" stroke-width="1.1"/></svg>
<svg style="position:absolute;left:756.4px;top:125.35px;" width="14.400000000000002" height="14.400000000000002" viewBox="0 0 24 24"><path fill="#d3202a" stroke="#d3202a" stroke-width="0.9" d="M5,4H19A2,2 0 0,1 21,6V18A2,2 0 0,1 19,20H5A2,2 0 0,1 3,18V6A2,2 0 0,1 5,4M5,8V12H11V8H5M13,8V12H19V8H13M5,14V18H11V14H5M13,14V18H19V14H13Z"/></svg>
<div style="position:absolute;left:776px;top:126.15px;font:400 14px/14px 'Liberation Sans', sans-serif;color:#111;white-space:pre;letter-spacing:-0.08px;">RiverInfo</div>
<svg style="position:absolute;left:841.3px;top:128.0px;" width="9.4" height="9.4" viewBox="0 0 9.4 9.4"><path d="M1 1L8.4 8.4M8.4 1L1 8.4" stroke="#777" stroke-width="1.1"/></svg>
<svg style="position:absolute;left:883.4px;top:125.35px;" width="14.400000000000002" height="14.400000000000002" viewBox="0 0 24 24"><path fill="#d3202a" stroke="#d3202a" stroke-width="0.9" d="M5,4H19A2,2 0 0,1 21,6V18A2,2 0 0,1 19,20H5A2,2 0 0,1 3,18V6A2,2 0 0,1 5,4M5,8V12H11V8H5M13,8V12H19V8H13M5,14V18H11V14H5M13,14V18H19V14H13Z"/></svg>
<div style="position:absolute;left:903px;top:126.15px;font:400 14px/14px 'Liberation Sans', sans-serif;color:#111;white-space:pre;letter-spacing:-0.04px;">SectionInfo</div>
<svg style="position:absolute;left:982.3px;top:128.0px;" width="9.4" height="9.4" viewBox="0 0 9.4 9.4"><path d="M1 1L8.4 8.4M8.4 1L1 8.4" stroke="#777" stroke-width="1.1"/></svg>
<div style="position:absolute;left:1251px;top:151px;width:11px;height:65px;background:#bbbbbb;border-radius:0 0 2px 2px;"></div>
<div style="position:absolute;left:368px;top:592px;width:260px;height:11px;background:#bbbbbb;border-radius:0 2px 2px 0;"></div>
<div style="position:absolute;left:1251px;top:592px;width:11px;height:11px;background:#dcdcdc;"></div>
<svg style="position:absolute;left:368px;top:151px;" width="894" height="452" viewBox="0 0 894 452"><g fill="none" stroke="#a6a6a6" stroke-width="1.5"><path d="M239 149H274.29999999999995L276.5 128"/><path d="M281 95L283.79999999999995 72.6H319.5"/><path d="M484 53.19999999999999H518.6L525.9 175"/><path d="M527.8 208L531 327H498"/></g></svg>
<div style="position:absolute;left:631px;top:246px;width:32px;height:31px;border:1px solid #cdcdcd;border-radius:7px;background:#ececec;"></div>
<div style="position:absolute;left:618px;top:255.2px;width:59px;height:17px;background:#ececec;"></div>
<div style="position:absolute;left:347.4px;width:600px;text-align:center;top:255.55px;font:400 14px/14px 'Liberation Sans', sans-serif;color:#111;white-space:pre;letter-spacing:0.12px;">inner join</div>
<div style="position:absolute;left:466px;top:264px;width:139px;height:277px;border:1px solid #c4c4c4;background:#fff;"></div>
<div style="position:absolute;left:467px;top:265px;width:139px;height:20px;background:#91d5fd;"></div>
<div style="position:absolute;left:467px;top:285px;width:139px;height:1px;background:#d6e6ef;"></div>
<div style="position:absolute;left:469.5px;top:267.75px;font:700 14px/14px 'Liberation Sans', sans-serif;color:#111;white-space:pre;letter-spacing:0.07px;">Customer</div>
<div style="position:absolute;left:590px;top:267px;width:14px;height:16px;background:#eaeaea;"></div>
<svg style="position:absolute;left:591.6px;top:269.9px;" width="10" height="10" viewBox="0 0 10 10"><path d="M1 1L9 9M9 1L1 9" stroke="#111" stroke-width="1.15"/></svg>
<svg style="position:absolute;left:476px;top:294.8px;" width="13" height="13" viewBox="0 0 13 13"><rect x="0.6" y="0.6" width="11.8" height="11.8" rx="2.5" fill="#fff" stroke="#767676" stroke-width="1.1"/></svg>
<svg style="position:absolute;left:496px;top:294.8px;" width="13" height="13" viewBox="0 0 13 13"><path d="M0.7 3.2v9.1h9.1" fill="none" stroke="#111" stroke-width="1.2"/><rect x="3.3" y="0.6" width="9.1" height="9.1" rx="1.2" fill="none" stroke="#111" stroke-width="1.2"/><path d="M6.6 3.3l1.4-1v5.4" fill="none" stroke="#111" stroke-width="1.1"/></svg>
<div style="position:absolute;left:513px;top:295.05px;font:700 14px/14px 'Liberation Sans', sans-serif;color:#111;white-space:pre;letter-spacing:0.02px;">CustomerId</div>
<svg style="position:absolute;left:476px;top:313.8px;" width="13" height="13" viewBox="0 0 13 13"><rect x="0" y="0" width="13" height="13" rx="2.5" fill="#1a7ef7"/><path d="M3 6.8l2.4 2.4 4.8-5.2" fill="none" stroke="#fff" stroke-width="1.8"/></svg>
<svg style="position:absolute;left:498.5px;top:314.8px;" width="7" height="13" viewBox="0 0 7 13"><rect x="0.7" y="0.7" width="5.6" height="11.2" rx="0.9" fill="none" stroke="#111" stroke-width="1.3"/><path d="M1 4.8h5M1 8.4h5" stroke="#111" stroke-width="1.1"/></svg>
<div style="position:absolute;left:513px;top:314.05px;font:700 14px/14px 'Liberation Sans', sans-serif;color:#111;white-space:pre;letter-spacing:0.01px;">FirstName</div>
<svg style="position:absolute;left:476px;top:332.8px;" width="13" height="13" viewBox="0 0 13 13"><rect x="0" y="0" width="13" height="13" rx="2.5" fill="#1a7ef7"/><path d="M3 6.8l2.4 2.4 4.8-5.2" fill="none" stroke="#fff" stroke-width="1.8"/></svg>
<svg style="position:absolute;left:498.5px;top:333.8px;" width="7" height="13" viewBox="0 0 7 13"><rect x="0.7" y="0.7" width="5.6" height="11.2" rx="0.9" fill="none" stroke="#111" stroke-width="1.3"/><path d="M1 4.8h5M1 8.4h5" stroke="#111" stroke-width="1.1"/></svg>
<div style="position:absolute;left:513px;top:333.05px;font:700 14px/14px 'Liberation Sans', sans-serif;color:#111;white-space:pre;letter-spacing:-0.01px;">LastName</div>
<svg style="position:absolute;left:476px;top:351.8px;" width="13" height="13" viewBox="0 0 13 13"><rect x="0.6" y="0.6" width="11.8" height="11.8" rx="2.5" fill="#fff" stroke="#767676" stroke-width="1.1"/></svg>
<svg style="position:absolute;left:498.5px;top:352.8px;" width="7" height="13" viewBox="0 0 7 13"><rect x="0.7" y="0.7" width="5.6" height="11.2" rx="0.9" fill="none" stroke="#111" stroke-width="1.3"/><path d="M1 4.8h5M1 8.4h5" stroke="#111" stroke-width="1.1"/></svg>
<div style="position:absolute;left:513px;top:352.05px;font:400 14px/14px 'Liberation Sans', sans-serif;color:#111;white-space:pre;letter-spacing:-0.01px;">Company</div>
<svg style="position:absolute;left:476px;top:370.8px;" width="13" height="13" viewBox="0 0 13 13"><rect x="0.6" y="0.6" width="11.8" height="11.8" rx="2.5" fill="#fff" stroke="#767676" stroke-width="1.1"/></svg>
<svg style="position:absolute;left:498.5px;top:371.8px;" width="7" height="13" viewBox="0 0 7 13"><rect x="0.7" y="0.7" width="5.6" height="11.2" rx="0.9" fill="none" stroke="#111" stroke-width="1.3"/><path d="M1 4.8h5M1 8.4h5" stroke="#111" stroke-width="1.1"/></svg>
<div style="position:absolute;left:513px;top:371.05px;font:400 14px/14px 'Liberation Sans', sans-serif;color:#111;white-space:pre;letter-spacing:-0.01px;">Address</div>
<svg style="position:absolute;left:476px;top:389.8px;" width="13" height="13" viewBox="0 0 13 13"><rect x="0.6" y="0.6" width="11.8" height="11.8" rx="2.5" fill="#fff" stroke="#767676" stroke-width="1.1"/></svg>
<svg style="position:absolute;left:498.5px;top:390.8px;" width="7" height="13" viewBox="0 0 7 13"><rect x="0.7" y="0.7" width="5.6" height="11.2" rx="0.9" fill="none" stroke="#111" stroke-width="1.3"/><path d="M1 4.8h5M1 8.4h5" stroke="#111" stroke-width="1.1"/></svg>
<div style="position:absolute;left:513px;top:390.05px;font:400 14px/14px 'Liberation Sans', sans-serif;color:#111;white-space:pre;letter-spacing:-0.11px;">City</div>
<svg style="position:absolute;left:476px;top:408.8px;" width="13" height="13" viewBox="0 0 13 13"><rect x="0.6" y="0.6" width="11.8" height="11.8" rx="2.5" fill="#fff" stroke="#767676" stroke-width="1.1"/></svg>
<svg style="position:absolute;left:498.5px;top:409.8px;" width="7" height="13" viewBox="0 0 7 13"><rect x="0.7" y="0.7" width="5.6" height="11.2" rx="0.9" fill="none" stroke="#111" stroke-width="1.3"/><path d="M1 4.8h5M1 8.4h5" stroke="#111" stroke-width="1.1"/></svg>
<div style="position:absolute;left:513px;top:409.05px;font:400 14px/14px 'Liberation Sans', sans-serif;color:#111;white-space:pre;letter-spacing:-0.06px;">State</div>
<svg style="position:absolute;left:476px;top:427.8px;" width="13" height="13" viewBox="0 0 13 13"><rect x="0.6" y="0.6" width="11.8" height="11.8" rx="2.5" fill="#fff" stroke="#767676" stroke-width="1.1"/></svg>
<svg style="position:absolute;left:498.5px;top:428.8px;" width="7" height="13" viewBox="0 0 7 13"><rect x="0.7" y="0.7" width="5.6" height="11.2" rx="0.9" fill="none" stroke="#111" stroke-width="1.3"/><path d="M1 4.8h5M1 8.4h5" stroke="#111" stroke-width="1.1"/></svg>
<div style="position:absolute;left:513px;top:428.05px;font:400 14px/14px 'Liberation Sans', sans-serif;color:#111;white-space:pre;letter-spacing:-0.01px;">Country</div>
<svg style="position:absolute;left:476px;top:446.8px;" width="13" height="13" viewBox="0 0 13 13"><rect x="0.6" y="0.6" width="11.8" height="11.8" rx="2.5" fill="#fff" stroke="#767676" stroke-width="1.1"/></svg>
<svg style="position:absolute;left:498.5px;top:447.8px;" width="7" height="13" viewBox="0 0 7 13"><rect x="0.7" y="0.7" width="5.6" height="11.2" rx="0.9" fill="none" stroke="#111" stroke-width="1.3"/><path d="M1 4.8h5M1 8.4h5" stroke="#111" stroke-width="1.1"/></svg>
<div style="position:absolute;left:513px;top:447.05px;font:400 14px/14px 'Liberation Sans', sans-serif;color:#111;white-space:pre;letter-spacing:-0.06px;">PostalCode</div>
<svg style="position:absolute;left:476px;top:465.8px;" width="13" height="13" viewBox="0 0 13 13"><rect x="0.6" y="0.6" width="11.8" height="11.8" rx="2.5" fill="#fff" stroke="#767676" stroke-width="1.1"/></svg>
<svg style="position:absolute;left:498.5px;top:466.8px;" width="7" height="13" viewBox="0 0 7 13"><rect x="0.7" y="0.7" width="5.6" height="11.2" rx="0.9" fill="none" stroke="#111" stroke-width="1.3"/><path d="M1 4.8h5M1 8.4h5" stroke="#111" stroke-width="1.1"/></svg>
<div style="position:absolute;left:513px;top:466.05px;font:400 14px/14px 'Liberation Sans', sans-serif;color:#111;white-space:pre;letter-spacing:-0.06px;">Phone</div>
<svg style="position:absolute;left:476px;top:484.8px;" width="13" height="13" viewBox="0 0 13 13"><rect x="0.6" y="0.6" width="11.8" height="11.8" rx="2.5" fill="#fff" stroke="#767676" stroke-width="1.1"/></svg>
<svg style="position:absolute;left:498.5px;top:485.8px;" width="7" height="13" viewBox="0 0 7 13"><rect x="0.7" y="0.7" width="5.6" height="11.2" rx="0.9" fill="none" stroke="#111" stroke-width="1.3"/><path d="M1 4.8h5M1 8.4h5" stroke="#111" stroke-width="1.1"/></svg>
<div style="position:absolute;left:513px;top:485.05px;font:400 14px/14px 'Liberation Sans', sans-serif;color:#111;white-space:pre;letter-spacing:-0.18px;">Fax</div>
<svg style="position:absolute;left:476px;top:503.8px;" width="13" height="13" viewBox="0 0 13 13"><rect x="0.6" y="0.6" width="11.8" height="11.8" rx="2.5" fill="#fff" stroke="#767676" stroke-width="1.1"/></svg>
<svg style="position:absolute;left:498.5px;top:504.8px;" width="7" height="13" viewBox="0 0 7 13"><rect x="0.7" y="0.7" width="5.6" height="11.2" rx="0.9" fill="none" stroke="#111" stroke-width="1.3"/><path d="M1 4.8h5M1 8.4h5" stroke="#111" stroke-width="1.1"/></svg>
<div style="position:absolute;left:513px;top:504.05px;font:700 14px/14px 'Liberation Sans', sans-serif;color:#111;white-space:pre;letter-spacing:0.02px;">Email</div>
<svg style="position:absolute;left:476px;top:522.8px;" width="13" height="13" viewBox="0 0 13 13"><rect x="0.6" y="0.6" width="11.8" height="11.8" rx="2.5" fill="#fff" stroke="#767676" stroke-width="1.1"/></svg>
<svg style="position:absolute;left:496px;top:522.8px;" width="13" height="14" viewBox="0 0 13 14"><circle cx="2.15" cy="4" r="1.85" fill="none" stroke="#111" stroke-width="1.2"/><path d="M4 4H11.6M8.3 4V6.4" stroke="#111" stroke-width="1.3" fill="none"/><path d="M4.7 7.9A2.4 2.5 0 0 0 4.7 12.9M7.1 7.9A2.4 2.5 0 0 1 7.1 12.9M4.5 10.4H7.3" stroke="#111" stroke-width="1.1" fill="none"/></svg>
<div style="position:absolute;left:513px;top:523.05px;font:400 14px/14px 'Liberation Sans', sans-serif;color:#111;white-space:pre;letter-spacing:-0.11px;">SupportRepId</div>
<div style="position:absolute;left:687px;top:168px;width:163px;height:202px;border:1px solid #c4c4c4;background:#fff;"></div>
<div style="position:absolute;left:688px;top:169px;width:163px;height:20px;background:#91d5fd;"></div>
<div style="position:absolute;left:688px;top:189px;width:163px;height:1px;background:#d6e6ef;"></div>
<div style="position:absolute;left:690.5px;top:171.75px;font:700 14px/14px 'Liberation Sans', sans-serif;color:#111;white-space:pre;letter-spacing:0.06px;">Invoice</div>
<div style="position:absolute;left:835px;top:171px;width:14px;height:16px;background:#eaeaea;"></div>
<svg style="position:absolute;left:836.6px;top:173.9px;" width="10" height="10" viewBox="0 0 10 10"><path d="M1 1L9 9M9 1L1 9" stroke="#111" stroke-width="1.15"/></svg>
<svg style="position:absolute;left:697px;top:198.8px;" width="13" height="13" viewBox="0 0 13 13"><rect x="0.6" y="0.6" width="11.8" height="11.8" rx="2.5" fill="#fff" stroke="#767676" stroke-width="1.1"/></svg>
<svg style="position:absolute;left:717px;top:198.8px;" width="13" height="13" viewBox="0 0 13 13"><path d="M0.7 3.2v9.1h9.1" fill="none" stroke="#111" stroke-width="1.2"/><rect x="3.3" y="0.6" width="9.1" height="9.1" rx="1.2" fill="none" stroke="#111" stroke-width="1.2"/><path d="M6.6 3.3l1.4-1v5.4" fill="none" stroke="#111" stroke-width="1.1"/></svg>
<div style="position:absolute;left:734px;top:199.05px;font:700 14px/14px 'Liberation Sans', sans-serif;color:#111;white-space:pre;letter-spacing:0.01px;">InvoiceId</div>
<svg style="position:absolute;left:697px;top:217.8px;" width="13" height="13" viewBox="0 0 13 13"><rect x="0.6" y="0.6" width="11.8" height="11.8" rx="2.5" fill="#fff" stroke="#767676" stroke-width="1.1"/></svg>
<svg style="position:absolute;left:717px;top:217.8px;" width="13" height="14" viewBox="0 0 13 14"><circle cx="2.15" cy="4" r="1.85" fill="none" stroke="#111" stroke-width="1.2"/><path d="M4 4H11.6M8.3 4V6.4" stroke="#111" stroke-width="1.3" fill="none"/><path d="M4.7 7.9A2.4 2.5 0 0 0 4.7 12.9M7.1 7.9A2.4 2.5 0 0 1 7.1 12.9M4.5 10.4H7.3" stroke="#111" stroke-width="1.1" fill="none"/></svg>
<div style="position:absolute;left:734px;top:218.05px;font:700 14px/14px 'Liberation Sans', sans-serif;color:#111;white-space:pre;letter-spacing:0.02px;">CustomerId</div>
<svg style="position:absolute;left:697px;top:236.8px;" width="13" height="13" viewBox="0 0 13 13"><rect x="0.6" y="0.6" width="11.8" height="11.8" rx="2.5" fill="#fff" stroke="#767676" stroke-width="1.1"/></svg>
<svg style="position:absolute;left:719.5px;top:237.8px;" width="7" height="13" viewBox="0 0 7 13"><rect x="0.7" y="0.7" width="5.6" height="11.2" rx="0.9" fill="none" stroke="#111" stroke-width="1.3"/><path d="M1 4.8h5M1 8.4h5" stroke="#111" stroke-width="1.1"/></svg>
<div style="position:absolute;left:734px;top:237.05px;font:700 14px/14px 'Liberation Sans', sans-serif;color:#111;white-space:pre;letter-spacing:0.03px;">InvoiceDate</div>
<svg style="position:absolute;left:697px;top:255.8px;" width="13" height="13" viewBox="0 0 13 13"><rect x="0" y="0" width="13" height="13" rx="2.5" fill="#1a7ef7"/><path d="M3 6.8l2.4 2.4 4.8-5.2" fill="none" stroke="#fff" stroke-width="1.8"/></svg>
<svg style="position:absolute;left:719.5px;top:256.8px;" width="7" height="13" viewBox="0 0 7 13"><rect x="0.7" y="0.7" width="5.6" height="11.2" rx="0.9" fill="none" stroke="#111" stroke-width="1.3"/><path d="M1 4.8h5M1 8.4h5" stroke="#111" stroke-width="1.1"/></svg>
<div style="position:absolute;left:734px;top:256.05px;font:400 14px/14px 'Liberation Sans', sans-serif;color:#111;white-space:pre;letter-spacing:-0.01px;">BillingAddress</div>
<svg style="position:absolute;left:697px;top:274.8px;" width="13" height="13" viewBox="0 0 13 13"><rect x="0.6" y="0.6" width="11.8" height="11.8" rx="2.5" fill="#fff" stroke="#767676" stroke-width="1.1"/></svg>
<svg style="position:absolute;left:719.5px;top:275.8px;" width="7" height="13" viewBox="0 0 7 13"><rect x="0.7" y="0.7" width="5.6" height="11.2" rx="0.9" fill="none" stroke="#111" stroke-width="1.3"/><path d="M1 4.8h5M1 8.4h5" stroke="#111" stroke-width="1.1"/></svg>
<div style="position:absolute;left:734px;top:275.05px;font:400 14px/14px 'Liberation Sans', sans-serif;color:#111;white-space:pre;letter-spacing:-0.04px;">BillingCity</div>
<svg style="position:absolute;left:697px;top:293.8px;" width="13" height="13" viewBox="0 0 13 13"><rect x="0.6" y="0.6" width="11.8" height="11.8" rx="2.5" fill="#fff" stroke="#767676" stroke-width="1.1"/></svg>
<svg style="position:absolute;left:719.5px;top:294.8px;" width="7" height="13" viewBox="0 0 7 13"><rect x="0.7" y="0.7" width="5.6" height="11.2" rx="0.9" fill="none" stroke="#111" stroke-width="1.3"/><path d="M1 4.8h5M1 8.4h5" stroke="#111" stroke-width="1.1"/></svg>
<div style="position:absolute;left:734px;top:294.05px;font:400 14px/14px 'Liberation Sans', sans-serif;color:#111;white-space:pre;letter-spacing:-0.03px;">BillingState</div>
<svg style="position:absolute;left:697px;top:312.8px;" width="13" height="13" viewBox="0 0 13 13"><rect x="0.6" y="0.6" width="11.8" height="11.8" rx="2.5" fill="#fff" stroke="#767676" stroke-width="1.1"/></svg>
<svg style="position:absolute;left:719.5px;top:313.8px;" width="7" height="13" viewBox="0 0 7 13"><rect x="0.7" y="0.7" width="5.6" height="11.2" rx="0.9" fill="none" stroke="#111" stroke-width="1.3"/><path d="M1 4.8h5M1 8.4h5" stroke="#111" stroke-width="1.1"/></svg>
<div style="position:absolute;left:734px;top:313.05px;font:400 14px/14px 'Liberation Sans', sans-serif;color:#111;white-space:pre;letter-spacing:-0.01px;">BillingCountry</div>
<svg style="position:absolute;left:697px;top:331.8px;" width="13" height="13" viewBox="0 0 13 13"><rect x="0.6" y="0.6" width="11.8" height="11.8" rx="2.5" fill="#fff" stroke="#767676" stroke-width="1.1"/></svg>
<svg style="position:absolute;left:719.5px;top:332.8px;" width="7" height="13" viewBox="0 0 7 13"><rect x="0.7" y="0.7" width="5.6" height="11.2" rx="0.9" fill="none" stroke="#111" stroke-width="1.3"/><path d="M1 4.8h5M1 8.4h5" stroke="#111" stroke-width="1.1"/></svg>
<div style="position:absolute;left:734px;top:332.05px;font:400 14px/14px 'Liberation Sans', sans-serif;color:#111;white-space:pre;letter-spacing:-0.04px;">BillingPostalCode</div>
<svg style="position:absolute;left:697px;top:350.8px;" width="13" height="13" viewBox="0 0 13 13"><rect x="0.6" y="0.6" width="11.8" height="11.8" rx="2.5" fill="#fff" stroke="#767676" stroke-width="1.1"/></svg>
<svg style="position:absolute;left:719.5px;top:351.8px;" width="7" height="13" viewBox="0 0 7 13"><rect x="0.7" y="0.7" width="5.6" height="11.2" rx="0.9" fill="none" stroke="#111" stroke-width="1.3"/><path d="M1 4.8h5M1 8.4h5" stroke="#111" stroke-width="1.1"/></svg>
<div style="position:absolute;left:734px;top:351.05px;font:700 14px/14px 'Liberation Sans', sans-serif;color:#111;white-space:pre;letter-spacing:0.02px;">Total</div>
<div style="position:absolute;left:726px;top:423px;width:139px;height:126px;border:1px solid #c4c4c4;background:#fff;"></div>
<div style="position:absolute;left:727px;top:424px;width:139px;height:20px;background:#91d5fd;"></div>
<div style="position:absolute;left:727px;top:444px;width:139px;height:1px;background:#d6e6ef;"></div>
<div style="position:absolute;left:729.5px;top:426.75px;font:700 14px/14px 'Liberation Sans', sans-serif;color:#111;white-space:pre;letter-spacing:0.03px;">InvoiceLine</div>
<div style="position:absolute;left:850px;top:426px;width:14px;height:16px;background:#eaeaea;"></div>
<svg style="position:absolute;left:851.6px;top:428.9px;" width="10" height="10" viewBox="0 0 10 10"><path d="M1 1L9 9M9 1L1 9" stroke="#111" stroke-width="1.15"/></svg>
<svg style="position:absolute;left:736px;top:453.8px;" width="13" height="13" viewBox="0 0 13 13"><rect x="0.6" y="0.6" width="11.8" height="11.8" rx="2.5" fill="#fff" stroke="#767676" stroke-width="1.1"/></svg>
<svg style="position:absolute;left:756px;top:453.8px;" width="13" height="13" viewBox="0 0 13 13"><path d="M0.7 3.2v9.1h9.1" fill="none" stroke="#111" stroke-width="1.2"/><rect x="3.3" y="0.6" width="9.1" height="9.1" rx="1.2" fill="none" stroke="#111" stroke-width="1.2"/><path d="M6.6 3.3l1.4-1v5.4" fill="none" stroke="#111" stroke-width="1.1"/></svg>
<div style="position:absolute;left:773px;top:454.05px;font:700 14px/14px 'Liberation Sans', sans-serif;color:#111;white-space:pre;letter-spacing:-0.00px;">InvoiceLineId</div>
<svg style="position:absolute;left:736px;top:472.8px;" width="13" height="13" viewBox="0 0 13 13"><rect x="0.6" y="0.6" width="11.8" height="11.8" rx="2.5" fill="#fff" stroke="#767676" stroke-width="1.1"/></svg>
<svg style="position:absolute;left:756px;top:472.8px;" width="13" height="14" viewBox="0 0 13 14"><circle cx="2.15" cy="4" r="1.85" fill="none" stroke="#111" stroke-width="1.2"/><path d="M4 4H11.6M8.3 4V6.4" stroke="#111" stroke-width="1.3" fill="none"/><path d="M4.7 7.9A2.4 2.5 0 0 0 4.7 12.9M7.1 7.9A2.4 2.5 0 0 1 7.1 12.9M4.5 10.4H7.3" stroke="#111" stroke-width="1.1" fill="none"/></svg>
<div style="position:absolute;left:773px;top:473.05px;font:700 14px/14px 'Liberation Sans', sans-serif;color:#111;white-space:pre;letter-spacing:0.01px;">InvoiceId</div>
<svg style="position:absolute;left:736px;top:491.8px;" width="13" height="13" viewBox="0 0 13 13"><rect x="0.6" y="0.6" width="11.8" height="11.8" rx="2.5" fill="#fff" stroke="#767676" stroke-width="1.1"/></svg>
<svg style="position:absolute;left:756px;top:491.8px;" width="13" height="14" viewBox="0 0 13 14"><circle cx="2.15" cy="4" r="1.85" fill="none" stroke="#111" stroke-width="1.2"/><path d="M4 4H11.6M8.3 4V6.4" stroke="#111" stroke-width="1.3" fill="none"/><path d="M4.7 7.9A2.4 2.5 0 0 0 4.7 12.9M7.1 7.9A2.4 2.5 0 0 1 7.1 12.9M4.5 10.4H7.3" stroke="#111" stroke-width="1.1" fill="none"/></svg>
<div style="position:absolute;left:773px;top:492.05px;font:700 14px/14px 'Liberation Sans', sans-serif;color:#111;white-space:pre;letter-spacing:-0.04px;">TrackId</div>
<svg style="position:absolute;left:736px;top:510.79999999999995px;" width="13" height="13" viewBox="0 0 13 13"><rect x="0.6" y="0.6" width="11.8" height="11.8" rx="2.5" fill="#fff" stroke="#767676" stroke-width="1.1"/></svg>
<svg style="position:absolute;left:758.5px;top:511.79999999999995px;" width="7" height="13" viewBox="0 0 7 13"><rect x="0.7" y="0.7" width="5.6" height="11.2" rx="0.9" fill="none" stroke="#111" stroke-width="1.3"/><path d="M1 4.8h5M1 8.4h5" stroke="#111" stroke-width="1.1"/></svg>
<div style="position:absolute;left:773px;top:511.05px;font:700 14px/14px 'Liberation Sans', sans-serif;color:#111;white-space:pre;letter-spacing:0.01px;">UnitPrice</div>
<svg style="position:absolute;left:736px;top:529.8px;" width="13" height="13" viewBox="0 0 13 13"><rect x="0.6" y="0.6" width="11.8" height="11.8" rx="2.5" fill="#fff" stroke="#767676" stroke-width="1.1"/></svg>
<svg style="position:absolute;left:758.5px;top:530.8px;" width="7" height="13" viewBox="0 0 7 13"><rect x="0.7" y="0.7" width="5.6" height="11.2" rx="0.9" fill="none" stroke="#111" stroke-width="1.3"/><path d="M1 4.8h5M1 8.4h5" stroke="#111" stroke-width="1.1"/></svg>
<div style="position:absolute;left:773px;top:530.05px;font:700 14px/14px 'Liberation Sans', sans-serif;color:#111;white-space:pre;letter-spacing:0.07px;">Quantity</div>
<div style="position:absolute;left:878px;top:326px;width:32px;height:31px;border:1px solid #cdcdcd;border-radius:7px;background:#ececec;"></div>
<div style="position:absolute;left:843.5px;top:335px;width:104px;height:17px;background:#ececec;"></div>
<div style="position:absolute;left:595.5px;width:600px;text-align:center;top:335.35px;font:400 14px/14px 'Liberation Sans', sans-serif;color:#111;white-space:pre;letter-spacing:0.12px;">where not exists</div>
<div style="position:absolute;left:898px;top:355px;width:190px;height:229.5px;background:#fff;border-radius:3px;box-shadow:0 3px 9px rgba(0,0,0,0.24),0 0 2px rgba(0,0,0,0.12);"></div>
<div style="position:absolute;left:918.6px;top:365.45px;font:400 14px/14px 'Liberation Sans', sans-serif;color:#222;white-space:pre;letter-spacing:-0.20px;">Remove</div>
<div style="position:absolute;left:898px;top:394px;width:190px;height:1px;background:#eeeeee;"></div>
<div style="position:absolute;left:918.6px;top:410.35px;font:400 14px/14px 'Liberation Sans', sans-serif;color:#222;white-space:pre;letter-spacing:-0.24px;">Set INNER JOIN</div>
<div style="position:absolute;left:918.6px;top:435.35px;font:400 14px/14px 'Liberation Sans', sans-serif;color:#222;white-space:pre;letter-spacing:-0.35px;">Set LEFT JOIN</div>
<div style="position:absolute;left:918.6px;top:460.35px;font:400 14px/14px 'Liberation Sans', sans-serif;color:#222;white-space:pre;letter-spacing:-0.31px;">Set RIGHT JOIN</div>
<div style="position:absolute;left:918.6px;top:485.35px;font:400 14px/14px 'Liberation Sans', sans-serif;color:#222;white-space:pre;letter-spacing:-0.37px;">Set FULL OUTER JOIN</div>
<div style="position:absolute;left:918.6px;top:510.35px;font:400 14px/14px 'Liberation Sans', sans-serif;color:#222;white-space:pre;letter-spacing:-0.53px;">Set CROSS JOIN</div>
<div style="position:absolute;left:918.6px;top:535.35px;font:400 14px/14px 'Liberation Sans', sans-serif;color:#222;white-space:pre;letter-spacing:-0.76px;">Set WHERE EXISTS</div>
<div style="position:absolute;left:918.6px;top:560.35px;font:400 14px/14px 'Liberation Sans', sans-serif;color:#222;white-space:pre;letter-spacing:-0.66px;">Set WHERE NOT EXISTS</div>
<div style="position:absolute;left:368px;top:603px;width:894px;height:36px;background:#d4d4d4;"></div>
<div style="position:absolute;left:368px;top:603px;width:894px;height:3px;background:#cbcbcb;"></div>
<div style="position:absolute;left:462px;top:606px;width:65px;height:33px;background:#ececec;"></div>
<div style="position:absolute;left:391.5px;top:614.95px;font:400 14px/14px 'Liberation Sans', sans-serif;color:#111;white-space:pre;letter-spacing:-0.01px;">Columns</div>
<div style="position:absolute;left:485.5px;top:614.95px;font:400 14px/14px 'Liberation Sans', sans-serif;color:#111;white-space:pre;letter-spacing:-0.78px;">SQL</div>
<div style="position:absolute;left:368px;top:639px;width:894px;height:157px;background:#ffffff;"></div>
<div style="position:absolute;left:368px;top:639px;width:45px;height:157px;background:#e8e8e8;"></div>
<div style="position:absolute;left:368px;top:639px;width:45px;height:12px;background:#d9d9d9;"></div>
<div style="position:absolute;left:413px;top:639px;width:834px;height:12px;background:#f5f5f5;"></div>
<div style="position:absolute;left:1253px;top:639px;width:9px;height:157px;background:#ececec;"></div>
<div style="position:absolute;left:1253px;top:639px;width:9px;height:115px;background:#bdbdbd;"></div>
<div style="position:absolute;left:-200.3px;width:600px;text-align:right;top:640.29px;font:400 11px/11px 'Liberation Mono', monospace;color:#a6a6a6;white-space:pre;letter-spacing:-0.6px;">1</div>
<div style="position:absolute;left:417px;top:640.29px;font:400 11px/11px 'Liberation Mono', monospace;color:#111;white-space:pre;letter-spacing:-0.6px;"><span style="font-weight:700;color:#111;">SELECT</span></div>
<div style="position:absolute;left:-200.3px;width:600px;text-align:right;top:652.29px;font:400 11px/11px 'Liberation Mono', monospace;color:#a6a6a6;white-space:pre;letter-spacing:-0.6px;">2</div>
<div style="position:absolute;left:417px;top:652.29px;font:400 11px/11px 'Liberation Mono', monospace;color:#111;white-space:pre;letter-spacing:-0.6px;">  <span style="color:#1b8bba;">`Invoice`</span>.<span style="color:#1b8bba;">`BillingAddress`</span>,</div>
<div style="position:absolute;left:-200.3px;width:600px;text-align:right;top:664.29px;font:400 11px/11px 'Liberation Mono', monospace;color:#a6a6a6;white-space:pre;letter-spacing:-0.6px;">3</div>
<div style="position:absolute;left:417px;top:664.29px;font:400 11px/11px 'Liberation Mono', monospace;color:#111;white-space:pre;letter-spacing:-0.6px;">  <span style="color:#1b8bba;">`Customer`</span>.<span style="color:#1b8bba;">`FirstName`</span>,</div>
<div style="position:absolute;left:-200.3px;width:600px;text-align:right;top:676.29px;font:400 11px/11px 'Liberation Mono', monospace;color:#a6a6a6;white-space:pre;letter-spacing:-0.6px;">4</div>
<div style="position:absolute;left:417px;top:676.29px;font:400 11px/11px 'Liberation Mono', monospace;color:#111;white-space:pre;letter-spacing:-0.6px;">  <span style="color:#1b8bba;">`Customer`</span>.<span style="color:#1b8bba;">`LastName`</span></div>
<div style="position:absolute;left:-200.3px;width:600px;text-align:right;top:688.29px;font:400 11px/11px 'Liberation Mono', monospace;color:#a6a6a6;white-space:pre;letter-spacing:-0.6px;">5</div>
<div style="position:absolute;left:417px;top:688.29px;font:400 11px/11px 'Liberation Mono', monospace;color:#111;white-space:pre;letter-spacing:-0.6px;"><span style="font-weight:700;color:#111;">FROM</span></div>
<div style="position:absolute;left:-200.3px;width:600px;text-align:right;top:700.29px;font:400 11px/11px 'Liberation Mono', monospace;color:#a6a6a6;white-space:pre;letter-spacing:-0.6px;">6</div>
<div style="position:absolute;left:417px;top:700.29px;font:400 11px/11px 'Liberation Mono', monospace;color:#111;white-space:pre;letter-spacing:-0.6px;">  <span style="color:#1b8bba;">`Invoice`</span></div>
<div style="position:absolute;left:-200.3px;width:600px;text-align:right;top:712.29px;font:400 11px/11px 'Liberation Mono', monospace;color:#a6a6a6;white-space:pre;letter-spacing:-0.6px;">7</div>
<div style="position:absolute;left:417px;top:712.29px;font:400 11px/11px 'Liberation Mono', monospace;color:#111;white-space:pre;letter-spacing:-0.6px;">  <span style="font-weight:700;color:#111;">INNER JOIN</span> <span style="color:#1b8bba;">`Customer`</span> <span style="font-weight:700;color:#111;">ON</span> <span style="color:#1b8bba;">`Invoice`</span>.<span style="color:#1b8bba;">`CustomerId`</span> <span style="font-weight:700;color:#111;">=</span> <span style="color:#1b8bba;">`Customer`</span>.<span style="color:#1b8bba;">`CustomerId`</span></div>
<div style="position:absolute;left:-200.3px;width:600px;text-align:right;top:724.29px;font:400 11px/11px 'Liberation Mono', monospace;color:#a6a6a6;white-space:pre;letter-spacing:-0.6px;">8</div>
<div style="position:absolute;left:417px;top:724.29px;font:400 11px/11px 'Liberation Mono', monospace;color:#111;white-space:pre;letter-spacing:-0.6px;"><span style="font-weight:700;color:#111;">WHERE</span></div>
<div style="position:absolute;left:-200.3px;width:600px;text-align:right;top:736.29px;font:400 11px/11px 'Liberation Mono', monospace;color:#a6a6a6;white-space:pre;letter-spacing:-0.6px;">9</div>
<div style="position:absolute;left:417px;top:736.29px;font:400 11px/11px 'Liberation Mono', monospace;color:#111;white-space:pre;letter-spacing:-0.6px;">  <span style="font-weight:700;color:#111;">NOT EXISTS (</span></div>
<div style="position:absolute;left:-200.3px;width:600px;text-align:right;top:748.29px;font:400 11px/11px 'Liberation Mono', monospace;color:#a6a6a6;white-space:pre;letter-spacing:-0.6px;">10</div>
<div style="position:absolute;left:417px;top:748.29px;font:400 11px/11px 'Liberation Mono', monospace;color:#111;white-space:pre;letter-spacing:-0.6px;">    <span style="font-weight:700;color:#111;">SELECT</span></div>
<div style="position:absolute;left:-200.3px;width:600px;text-align:right;top:760.29px;font:400 11px/11px 'Liberation Mono', monospace;color:#a6a6a6;white-space:pre;letter-spacing:-0.6px;">11</div>
<div style="position:absolute;left:417px;top:760.29px;font:400 11px/11px 'Liberation Mono', monospace;color:#111;white-space:pre;letter-spacing:-0.6px;">      <span style="font-weight:700;color:#111;">*</span></div>
<div style="position:absolute;left:-200.3px;width:600px;text-align:right;top:772.29px;font:400 11px/11px 'Liberation Mono', monospace;color:#a6a6a6;white-space:pre;letter-spacing:-0.6px;">12</div>
<div style="position:absolute;left:417px;top:772.29px;font:400 11px/11px 'Liberation Mono', monospace;color:#111;white-space:pre;letter-spacing:-0.6px;">    <span style="font-weight:700;color:#111;">FROM</span></div>
<div style="position:absolute;left:-200.3px;width:600px;text-align:right;top:784.29px;font:400 11px/11px 'Liberation Mono', monospace;color:#a6a6a6;white-space:pre;letter-spacing:-0.6px;">13</div>
<div style="position:absolute;left:417px;top:784.29px;font:400 11px/11px 'Liberation Mono', monospace;color:#111;white-space:pre;letter-spacing:-0.6px;">      <span style="color:#1b8bba;">`InvoiceLine`</span></div>
<div style="position:absolute;left:416px;top:640px;width:1px;height:11px;background:#777777;"></div>
<div style="position:absolute;left:441px;top:759px;width:0;height:12px;border-left:1px dotted #bbb;"></div>
<div style="position:absolute;left:441px;top:783px;width:0;height:12px;border-left:1px dotted #bbb;"></div>
<div style="position:absolute;left:5px;top:796px;width:1257px;height:22px;background:#7e2f18;"></div>
<svg style="position:absolute;left:14.4px;top:799.25px;" width="14.8" height="14.8" viewBox="0 0 24 24"><path fill="#e6e6e6" fill-rule="nonzero" d="M12,3C7.58,3 4,4.79 4,7C4,9.21 7.58,11 12,11C16.42,11 20,9.21 20,7C20,4.79 16.42,3 12,3M4,9V12C4,14.21 7.58,16 12,16C16.42,16 20,14.21 20,12V9C20,11.21 16.42,13 12,13C7.58,13 4,11.21 4,9M4,14V17C4,19.21 7.58,21 12,21C16.42,21 20,19.21 20,17V14C20,16.21 16.42,18 12,18C7.58,18 4,16.21 4,14Z"/></svg>
<div style="position:absolute;left:33.6px;top:800.15px;font:400 14px/14px 'Liberation Sans', sans-serif;color:#e6e6e6;white-space:pre;letter-spacing:-0.01px;">Chinook</div>
<div style="position:absolute;left:105px;top:799px;width:20px;height:16px;background:#f07a46;border-radius:2.5px;"></div>
<svg style="position:absolute;left:108.15px;top:799.9px;" width="13.9" height="13.9" viewBox="0 0 24 24"><path fill="#1c1c1c" fill-rule="nonzero" d="M17.5,12A1.5,1.5 0 0,1 16,10.5A1.5,1.5 0 0,1 17.5,9A1.5,1.5 0 0,1 19,10.5A1.5,1.5 0 0,1 17.5,12M14.5,8A1.5,1.5 0 0,1 13,6.5A1.5,1.5 0 0,1 14.5,5A1.5,1.5 0 0,1 16,6.5A1.5,1.5 0 0,1 14.5,8M9.5,8A1.5,1.5 0 0,1 8,6.5A1.5,1.5 0 0,1 9.5,5A1.5,1.5 0 0,1 11,6.5A1.5,1.5 0 0,1 9.5,8M6.5,12A1.5,1.5 0 0,1 5,10.5A1.5,1.5 0 0,1 6.5,9A1.5,1.5 0 0,1 8,10.5A1.5,1.5 0 0,1 6.5,12M12,3A9,9 0 0,0 3,12A9,9 0 0,0 12,21A1.5,1.5 0 0,0 13.5,19.5C13.5,19.11 13.35,18.76 13.11,18.5C12.88,18.23 12.73,17.88 12.73,17.5A1.5,1.5 0 0,1 14.23,16H16A5,5 0 0,0 21,11C21,6.58 16.97,3 12,3Z"/></svg>
<svg style="position:absolute;left:145.05px;top:799.65px;" width="13.7" height="13.7" viewBox="0 0 24 24"><path fill="#e6e6e6" fill-rule="nonzero" d="M4,1H20A1,1 0 0,1 21,2V6A1,1 0 0,1 20,7H4A1,1 0 0,1 3,6V2A1,1 0 0,1 4,1M4,9H20A1,1 0 0,1 21,10V14A1,1 0 0,1 20,15H4A1,1 0 0,1 3,14V10A1,1 0 0,1 4,9M4,17H20A1,1 0 0,1 21,18V22A1,1 0 0,1 20,23H4A1,1 0 0,1 3,22V18A1,1 0 0,1 4,17M9,5H10V3H9V5M9,13H10V11H9V13M9,21H10V19H9V21M5,3V5H7V3H5M5,11V13H7V11H5M5,19V21H7V19H5Z"/></svg>
<div style="position:absolute;left:163.3px;top:800.15px;font:400 14px/14px 'Liberation Sans', sans-serif;color:#e6e6e6;white-space:pre;letter-spacing:-0.84px;">MYSQL TEST</div>
<div style="position:absolute;left:264px;top:799px;width:20px;height:16px;background:#cfcfcf;border-radius:2.5px;"></div>
<svg style="position:absolute;left:267.15px;top:799.9px;" width="13.9" height="13.9" viewBox="0 0 24 24"><path fill="#1c1c1c" fill-rule="nonzero" d="M17.5,12A1.5,1.5 0 0,1 16,10.5A1.5,1.5 0 0,1 17.5,9A1.5,1.5 0 0,1 19,10.5A1.5,1.5 0 0,1 17.5,12M14.5,8A1.5,1.5 0 0,1 13,6.5A1.5,1.5 0 0,1 14.5,5A1.5,1.5 0 0,1 16,6.5A1.5,1.5 0 0,1 14.5,8M9.5,8A1.5,1.5 0 0,1 8,6.5A1.5,1.5 0 0,1 9.5,5A1.5,1.5 0 0,1 11,6.5A1.5,1.5 0 0,1 9.5,8M6.5,12A1.5,1.5 0 0,1 5,10.5A1.5,1.5 0 0,1 6.5,9A1.5,1.5 0 0,1 8,10.5A1.5,1.5 0 0,1 6.5,12M12,3A9,9 0 0,0 3,12A9,9 0 0,0 12,21A1.5,1.5 0 0,0 13.5,19.5C13.5,19.11 13.35,18.76 13.11,18.5C12.88,18.23 12.73,17.88 12.73,17.5A1.5,1.5 0 0,1 14.23,16H16A5,5 0 0,0 21,11C21,6.58 16.97,3 12,3Z"/></svg>
<svg style="position:absolute;left:303.3px;top:799.65px;" width="14.4" height="14.4" viewBox="0 0 24 24"><path fill="#e6e6e6" fill-rule="nonzero" d="M12,4A4,4 0 0,1 16,8A4,4 0 0,1 12,12A4,4 0 0,1 8,8A4,4 0 0,1 12,4M12,14C16.42,14 20,15.79 20,18V20H4V18C4,15.79 7.58,14 12,14Z"/></svg>
<div style="position:absolute;left:322px;top:800.15px;font:400 14px/14px 'Liberation Sans', sans-serif;color:#e6e6e6;white-space:pre;letter-spacing:0.60px;">root</div>
<svg style="position:absolute;left:369.1px;top:799.7px;" width="14.2" height="14.2" viewBox="0 0 24 24"><circle cx="12" cy="12" r="10" fill="#6fd05c"/><path fill="#7e2f18" d="M10,17L5,12L6.41,10.59L10,14.17L17.59,6.58L19,8L10,17Z"/></svg>
<div style="position:absolute;left:387.6px;top:800.15px;font:400 14px/14px 'Liberation Sans', sans-serif;color:#e6e6e6;white-space:pre;letter-spacing:0.21px;">Connected</div>
<svg style="position:absolute;left:475.7px;top:799.5px;" width="14.4" height="14.4" viewBox="0 0 24 24"><path fill="#e6e6e6" d="M22,10V6C22,4.89 21.1,4 20,4H4A2,2 0 0,0 2,6V10C3.11,10 4,10.9 4,12A2,2 0 0,1 2,14V18A2,2 0 0,0 4,20H20A2,2 0 0,0 22,18V14A2,2 0 0,1 20,12A2,2 0 0,1 22,10Z"/><path fill="#7e2f18" d="M13,8.5H11V6.5H13V8.5M13,13H11V11H13V13M13,17.5H11V15.5H13V17.5Z"/></svg>
<div style="position:absolute;left:494.3px;top:800.15px;font:400 14px/14px 'Liberation Sans', sans-serif;color:#e6e6e6;white-space:pre;letter-spacing:-0.18px;">MySQL 8.0.20</div>
<svg style="position:absolute;left:600.65px;top:799.2px;" width="14.4" height="14.4" viewBox="0 0 24 24"><path fill="#e6e6e6" fill-rule="nonzero" d="M13.5,8H12V13L16.28,15.54L17,14.33L13.5,12.25V8M13,3A9,9 0 0,0 4,12H1L4.96,16.03L9,12H6A7,7 0 0,1 13,5A7,7 0 0,1 20,12A7,7 0 0,1 13,19C11.07,19 9.32,18.21 8.06,16.94L6.64,18.36C8.27,20 10.5,21 13,21A9,9 0 0,0 22,12A9,9 0 0,0 13,3Z"/></svg>
<div style="position:absolute;left:623px;top:800.15px;font:400 14px/14px 'Liberation Sans', sans-serif;color:#e6e6e6;white-space:pre;letter-spacing:0.10px;">6 minutes ago</div>
<!--MAIN-->
</body></html>
